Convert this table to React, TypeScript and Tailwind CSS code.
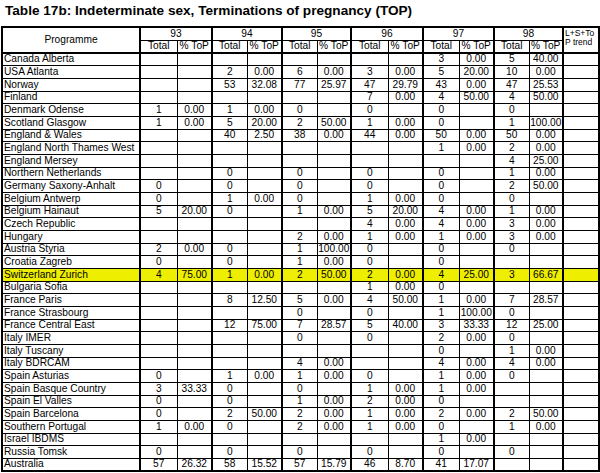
import React from "react";

const years = ["93", "94", "95", "96", "97", "98"];

const rows: [string, string[], boolean?][] = [
  ["Canada Alberta", ["", "", "", "", "", "", "", "", "3", "0.00", "5", "40.00"]],
  ["USA Atlanta", ["", "", "2", "0.00", "6", "0.00", "3", "0.00", "5", "20.00", "10", "0.00"]],
  ["Norway", ["", "", "53", "32.08", "77", "25.97", "47", "29.79", "43", "0.00", "47", "25.53"]],
  ["Finland", ["", "", "", "", "", "", "7", "0.00", "4", "50.00", "4", "50.00"]],
  ["Denmark Odense", ["1", "0.00", "1", "0.00", "0", "", "0", "", "0", "", "0", ""]],
  ["Scotland Glasgow", ["1", "0.00", "5", "20.00", "2", "50.00", "1", "0.00", "0", "", "1", "100.00"]],
  ["England & Wales", ["", "", "40", "2.50", "38", "0.00", "44", "0.00", "50", "0.00", "50", "0.00"]],
  ["England North Thames West", ["", "", "", "", "", "", "", "", "1", "0.00", "2", "0.00"]],
  ["England Mersey", ["", "", "", "", "", "", "", "", "", "", "4", "25.00"]],
  ["Northern Netherlands", ["", "", "0", "", "0", "", "0", "", "0", "", "1", "0.00"]],
  ["Germany Saxony-Anhalt", ["0", "", "0", "", "0", "", "0", "", "0", "", "2", "50.00"]],
  ["Belgium Antwerp", ["0", "", "1", "0.00", "0", "", "1", "0.00", "0", "", "0", ""]],
  ["Belgium Hainaut", ["5", "20.00", "0", "", "1", "0.00", "5", "20.00", "4", "0.00", "1", "0.00"]],
  ["Czech Republic", ["", "", "", "", "", "", "4", "0.00", "4", "0.00", "3", "0.00"]],
  ["Hungary", ["", "", "", "", "2", "0.00", "1", "0.00", "1", "0.00", "3", "0.00"]],
  ["Austria Styria", ["2", "0.00", "0", "", "1", "100.00", "0", "", "0", "", "0", ""]],
  ["Croatia Zagreb", ["0", "", "0", "", "1", "0.00", "0", "", "0", "", "", ""]],
  ["Switzerland Zurich", ["4", "75.00", "1", "0.00", "2", "50.00", "2", "0.00", "4", "25.00", "3", "66.67"], true],
  ["Bulgaria Sofia", ["", "", "", "", "", "", "1", "0.00", "0", "", "", ""]],
  ["France Paris", ["", "", "8", "12.50", "5", "0.00", "4", "50.00", "1", "0.00", "7", "28.57"]],
  ["France Strasbourg", ["", "", "", "", "0", "", "0", "", "1", "100.00", "0", ""]],
  ["France Central East", ["", "", "12", "75.00", "7", "28.57", "5", "40.00", "3", "33.33", "12", "25.00"]],
  ["Italy IMER", ["", "", "", "", "0", "", "0", "", "2", "0.00", "0", ""]],
  ["Italy Tuscany", ["", "", "", "", "", "", "", "", "0", "", "1", "0.00"]],
  ["Italy BDRCAM", ["", "", "", "", "4", "0.00", "", "", "4", "0.00", "4", "0.00"]],
  ["Spain Asturias", ["0", "", "1", "0.00", "1", "0.00", "0", "", "1", "0.00", "0", ""]],
  ["Spain Basque Country", ["3", "33.33", "0", "", "0", "", "1", "0.00", "1", "0.00", "", ""]],
  ["Spain El Valles", ["0", "", "0", "", "1", "0.00", "2", "0.00", "0", "", "", ""]],
  ["Spain Barcelona", ["0", "", "2", "50.00", "2", "0.00", "1", "0.00", "2", "0.00", "2", "50.00"]],
  ["Southern Portugal", ["1", "0.00", "0", "", "2", "0.00", "1", "0.00", "0", "", "1", "0.00"]],
  ["Israel IBDMS", ["", "", "", "", "", "", "", "", "1", "0.00", "", ""]],
  ["Russia Tomsk", ["0", "", "0", "", "0", "", "0", "", "0", "", "0", ""]],
  ["Australia", ["57", "26.32", "58", "15.52", "57", "15.79", "46", "8.70", "41", "17.07", "", ""]],
];

const colWidths = [138, 37, 35, 35, 35, 35, 34, 37, 35, 36, 35, 35, 34, 36];

export default function App() {
  return (
    <div
      className="w-[600px] h-[473px] bg-white text-black overflow-hidden"
      style={{ fontFamily: '"Liberation Sans", Arial, sans-serif' }}
    >
      <div className="h-[26px] pl-[5px] pt-[2px] text-[13.6px] font-bold leading-[18px]">
        Table 17b: Indeterminate sex, Terminations of pregnancy (TOP)
      </div>
      <table className="ml-[1px] w-[597px] table-fixed border-collapse border-2 border-black text-[10.2px] leading-[10px]">
        <colgroup>
          {colWidths.map((w, i) => (
            <col key={i} style={{ width: w }} />
          ))}
        </colgroup>
        <thead>
          <tr className="h-[13px]">
            <th rowSpan={2} className="border-2 border-b-2 border-black font-normal text-center p-0">
              Programme
            </th>
            {years.map((y) => (
              <th key={y} colSpan={2} className="border border-l-2 border-r-2 border-black font-normal text-center p-0">
                {y}
              </th>
            ))}
            <th rowSpan={2} className="border border-l-2 border-b-2 border-black font-normal text-left align-top p-0 pl-[1px] pt-[1px] text-[8.5px] leading-[9px]">
              L+S+To P trend
            </th>
          </tr>
          <tr className="h-[13px]">
            {years.map((y) => (
              <React.Fragment key={y}>
                <th className="border border-l-2 border-b-2 border-black font-normal text-center p-0">Total</th>
                <th className="border border-r-2 border-b-2 border-black font-normal text-center p-0 whitespace-nowrap">% ToP</th>
              </React.Fragment>
            ))}
          </tr>
        </thead>
        <tbody>
          {rows.map(([name, vals, hl], r) => {
            const h = r % 3 === 0 ? "h-[12px]" : "h-[13px]";
            return (
              <tr key={name} className={hl ? h + " bg-[#eeee00]" : h}>
                <td className="border border-r-2 border-black p-0 pl-[1px] whitespace-nowrap overflow-hidden">{name}</td>
                {vals.map((v, i) => (
                  <td
                    key={i}
                    className={
                      i % 2 === 0
                        ? "border border-l-2 border-black p-0 text-center"
                        : "border border-r-2 border-black p-0 text-center whitespace-nowrap"
                    }
                  >
                    {v}
                  </td>
                ))}
                <td className="border border-l-2 border-black p-0"></td>
              </tr>
            );
          })}
        </tbody>
      </table>
    </div>
  );
}
